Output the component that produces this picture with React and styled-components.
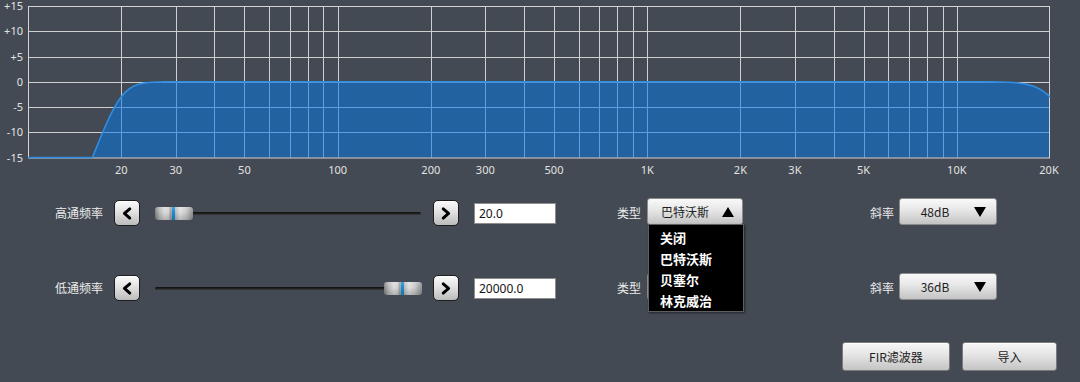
import React from 'react'
import styled, { createGlobalStyle } from 'styled-components'

const GlobalStyle = createGlobalStyle`
  html, body {
    margin: 0;
    padding: 0;
    background: #434a53;
  }
  body {
    font-family: "Noto Sans CJK SC", "Noto Sans", sans-serif;
  }
`

// plot area, 10 Hz .. 20 kHz on a log scale, -15 .. +15 dB
const X0 = 28
const X1 = 1050
const Y0 = 6
const Y1 = 157.5
const PX_PER_DEC = (X1 - X0) / Math.log10(2000)
const xOf = (f) => X0 + Math.log10(f / 10) * PX_PER_DEC
const yOf = (db) => Y0 + ((15 - db) * (Y1 - Y0)) / 30
const crisp = (v) => Math.round(v) + 0.5

const gridFreqs = []
for (let d = 10; d <= 1000; d *= 10) {
  for (let m = d === 10 ? 2 : 1; m <= 9; m++) gridFreqs.push(m * d)
}
gridFreqs.push(10000)
const gridDb = [10, 5, 0, -5, -10]

const freqLabels = [
  [20, '20'], [30, '30'], [50, '50'], [100, '100'], [200, '200'], [300, '300'],
  [500, '500'], [1000, '1K'], [2000, '2K'], [3000, '3K'], [5000, '5K'],
  [10000, '10K'], [20000, '20K'],
]
const dbLabels = [[15, '+15'], [10, '+10'], [5, '+5'], [0, '0'], [-5, '-5'], [-10, '-10'], [-15, '-15']]

// butterworth 48dB/oct high pass at 20 Hz, 36dB/oct low pass at 20 kHz
const response = (f) => {
  const hp = -10 * Math.log10(1 + Math.pow(20 / f, 16))
  const lp = -10 * Math.log10(1 + Math.pow(f / 20000, 12))
  return Math.max(-15, hp + lp)
}

const curve = []
for (let x = X0; x <= X1; x += 1) {
  const f = 10 * Math.pow(10, (x - X0) / PX_PER_DEC)
  curve.push(`${x},${yOf(response(f)).toFixed(2)}`)
}
const curveLine = `M${curve.join(' L')}`
const curveFill = `M${X0},${Y1} L${curve.join(' L')} L${X1},${Y1} Z`

const Page = styled.div`
  width: 1080px;
  height: 382px;
  display: flex;
  flex-direction: column;
  overflow: hidden;
`

const Chart = styled.svg`
  display: block;
  flex: none;
`

const AxisText = styled.text`
  fill: #e2e2e2;
  font-size: 11px;
  font-family: "Noto Sans", "Open Sans", sans-serif;
`

const Rows = styled.div`
  display: flex;
  flex-direction: column;
  gap: 47px;
  padding: 19px 0 0 55px;
`

const Row = styled.div`
  display: flex;
  align-items: center;
  height: 28px;
`

const Label = styled.span`
  flex: none;
  width: ${(p) => p.$width}px;
  margin-left: ${(p) => p.$offset || 0}px;
  font-size: 12px;
  line-height: 1;
  color: #ececec;
  white-space: nowrap;
`

const StepButton = styled.button`
  flex: none;
  width: 26px;
  height: 26px;
  padding: 0;
  display: flex;
  align-items: center;
  justify-content: center;
  border: 1px solid #1e1e1e;
  border-radius: 5px;
  background: linear-gradient(#fbfbfb, #e2e2e2 45%, #bcbcbc);
  box-shadow: inset 0 1px 0 #ffffff;
`

const Slider = styled.div`
  flex: none;
  position: relative;
  width: 267px;
  height: 13px;
  margin: 0 11px 0 15px;
  display: flex;
  align-items: center;

  &::before {
    content: '';
    position: absolute;
    left: 0;
    right: 1px;
    top: 5px;
    height: 3px;
    border-radius: 2px;
    background: linear-gradient(#0c0c0c, #262626 60%, #3c3c3c);
  }
`

const Thumb = styled.div`
  position: relative;
  width: 38px;
  height: 13px;
  border-radius: 3px;
  background:
    linear-gradient(rgba(255, 255, 255, 0.18), rgba(0, 0, 0, 0) 40%, rgba(0, 0, 0, 0.18)),
    linear-gradient(
      to right,
      #7f8184 0%,
      #b9babc 12%,
      #dcdcdc 26%,
      #d2d2d2 36%,
      #a3a4a6 40%,
      #a3a4a6 45%,
      #1b8fd3 45%,
      #1b8fd3 53%,
      #b7b8ba 53%,
      #e0e0e0 66%,
      #c9c9c9 82%,
      #8e9093 100%
    );
`

const ValueInput = styled.input`
  flex: none;
  box-sizing: border-box;
  width: 82px;
  height: 21px;
  margin-left: 15px;
  padding: 0 4px;
  border: 1px solid #8d8d8d;
  background: #ffffff;
  color: #141414;
  font-family: "Noto Sans", "Noto Sans CJK SC", sans-serif;
  font-size: 12px;
  outline: none;
`

const SelectBox = styled.div`
  flex: none;
  position: relative;
  box-sizing: border-box;
  width: ${(p) => p.$width}px;
  height: 27px;
  margin-top: -3px;
  padding: 0 ${(p) => p.$right}px 0 ${(p) => p.$left}px;
  display: flex;
  align-items: center;
  border: 1px solid #8c8c8c;
  border-radius: 3px;
  background: linear-gradient(#f9f9f9, #e6e6e6 45%, #c3c3c3);
  color: #1e1e1e;
  font-size: 12px;
`

const SelectText = styled.span`
  flex: 1;
  text-align: ${(p) => (p.$center ? 'center' : 'left')};
  padding-right: ${(p) => (p.$center ? 10 : 0)}px;
`

const Caret = styled.span`
  flex: none;
  width: 0;
  height: 0;
  border-left: 6.5px solid transparent;
  border-right: 6.5px solid transparent;
  ${(p) => (p.$up ? 'border-bottom: 10px solid #000;' : 'border-top: 10px solid #000;')}
`

const Menu = styled.ul`
  position: absolute;
  z-index: 10;
  top: 100%;
  left: 0;
  box-sizing: border-box;
  width: 96px;
  margin: 0;
  padding: 2px 0 0;
  list-style: none;
  background: #000;
  border: 1px solid #5e5e5e;
  box-shadow: 1px 1px 2px rgba(0, 0, 0, 0.5);
`

const MenuItem = styled.li`
  height: 21px;
  line-height: 21px;
  padding-left: 11px;
  color: #ffffff;
  font-size: 13px;
  font-weight: 700;
  white-space: nowrap;
`

const Footer = styled.div`
  display: flex;
  justify-content: flex-end;
  gap: 12px;
  margin-top: 40px;
  padding-right: 23px;
`

const ActionButton = styled.button`
  width: ${(p) => p.$width}px;
  height: 29px;
  padding: 0;
  border: 1px solid #7a7a7a;
  border-radius: 3px;
  background: linear-gradient(#f7f7f7, #e4e4e4 45%, #c4c4c4);
  box-shadow: inset 0 1px 0 #ffffff;
  color: #1e1e1e;
  font-family: "Noto Sans CJK SC", "Noto Sans", sans-serif;
  font-size: 12px;
`

const Chevron = ({ dir }) => (
  <svg width="26" height="26" viewBox="0 0 26 26">
    <path
      d={dir === 'left' ? 'M16 8.5 L10.2 13.5 L16 18.5' : 'M10 8.5 L15.8 13.5 L10 18.5'}
      fill="none"
      stroke="#000"
      strokeWidth="3.2"
      strokeLinecap="round"
      strokeLinejoin="round"
    />
  </svg>
)

const ResponseChart = () => (
  <Chart width="1080" height="180" viewBox="0 0 1080 180">
    <defs>
      <clipPath id="fill-clip">
        <path d={curveFill} />
      </clipPath>
    </defs>
    <g stroke="#cfcfcf" strokeWidth="1">
      {gridFreqs.map((f) => (
        <line key={f} x1={crisp(xOf(f))} x2={crisp(xOf(f))} y1={Y0} y2={Y1} />
      ))}
      {gridDb.map((db) => (
        <line key={db} x1={X0} x2={X1} y1={crisp(yOf(db))} y2={crisp(yOf(db))} />
      ))}
    </g>
    <path d={curveFill} fill="#2262a0" />
    <g stroke="#5c9fe2" strokeWidth="1" clipPath="url(#fill-clip)">
      {gridFreqs.map((f) => (
        <line key={f} x1={crisp(xOf(f))} x2={crisp(xOf(f))} y1={Y0} y2={Y1} />
      ))}
      {gridDb.map((db) => (
        <line key={db} x1={X0} x2={X1} y1={crisp(yOf(db))} y2={crisp(yOf(db))} />
      ))}
    </g>
    <rect x={X0 + 0.5} y={Y0 + 0.5} width={X1 - X0 - 1} height={Y1 - Y0} fill="none" stroke="#d4d4d4" />
    <path d={curveLine} fill="none" stroke="#2f8ce0" strokeWidth="1.6" />
    {dbLabels.map(([db, t]) => (
      <AxisText key={t} x="23" y={yOf(db) + 4} textAnchor="end">
        {t}
      </AxisText>
    ))}
    {freqLabels.map(([f, t]) => (
      <AxisText key={t} x={Math.min(xOf(f), 1049)} y="174" textAnchor="middle">
        {t}
      </AxisText>
    ))}
  </Chart>
)

const FilterRow = ({ name, value, thumbAt, type, slope, open }) => (
  <Row>
    <Label $width={59}>{name}</Label>
    <StepButton>
      <Chevron dir="left" />
    </StepButton>
    <Slider>
      <Thumb style={{ marginLeft: `${thumbAt * (267 - 38)}px` }} />
    </Slider>
    <StepButton>
      <Chevron dir="right" />
    </StepButton>
    <ValueInput readOnly value={value} />
    <Label $width={30} $offset={61}>类型</Label>
    <SelectBox $width={96} $left={13} $right={8}>
      <SelectText>{type}</SelectText>
      <Caret $up={open} />
      {open && (
        <Menu>
          {['关闭', '巴特沃斯', '贝塞尔', '林克威治'].map((t) => (
            <MenuItem key={t}>{t}</MenuItem>
          ))}
        </Menu>
      )}
    </SelectBox>
    <Label $width={29} $offset={127}>斜率</Label>
    <SelectBox $width={98} $left={6} $right={10}>
      <SelectText $center>{slope}</SelectText>
      <Caret />
    </SelectBox>
  </Row>
)

const App = () => (
  <Page>
    <GlobalStyle />
    <ResponseChart />
    <Rows>
      <FilterRow name="高通频率" value="20.0" thumbAt={0} type="巴特沃斯" slope="48dB" open />
      <FilterRow name="低通频率" value="20000.0" thumbAt={1} type="巴特沃斯" slope="36dB" />
    </Rows>
    <Footer>
      <ActionButton $width={108}>FIR滤波器</ActionButton>
      <ActionButton $width={95}>导入</ActionButton>
    </Footer>
  </Page>
)

export default App
